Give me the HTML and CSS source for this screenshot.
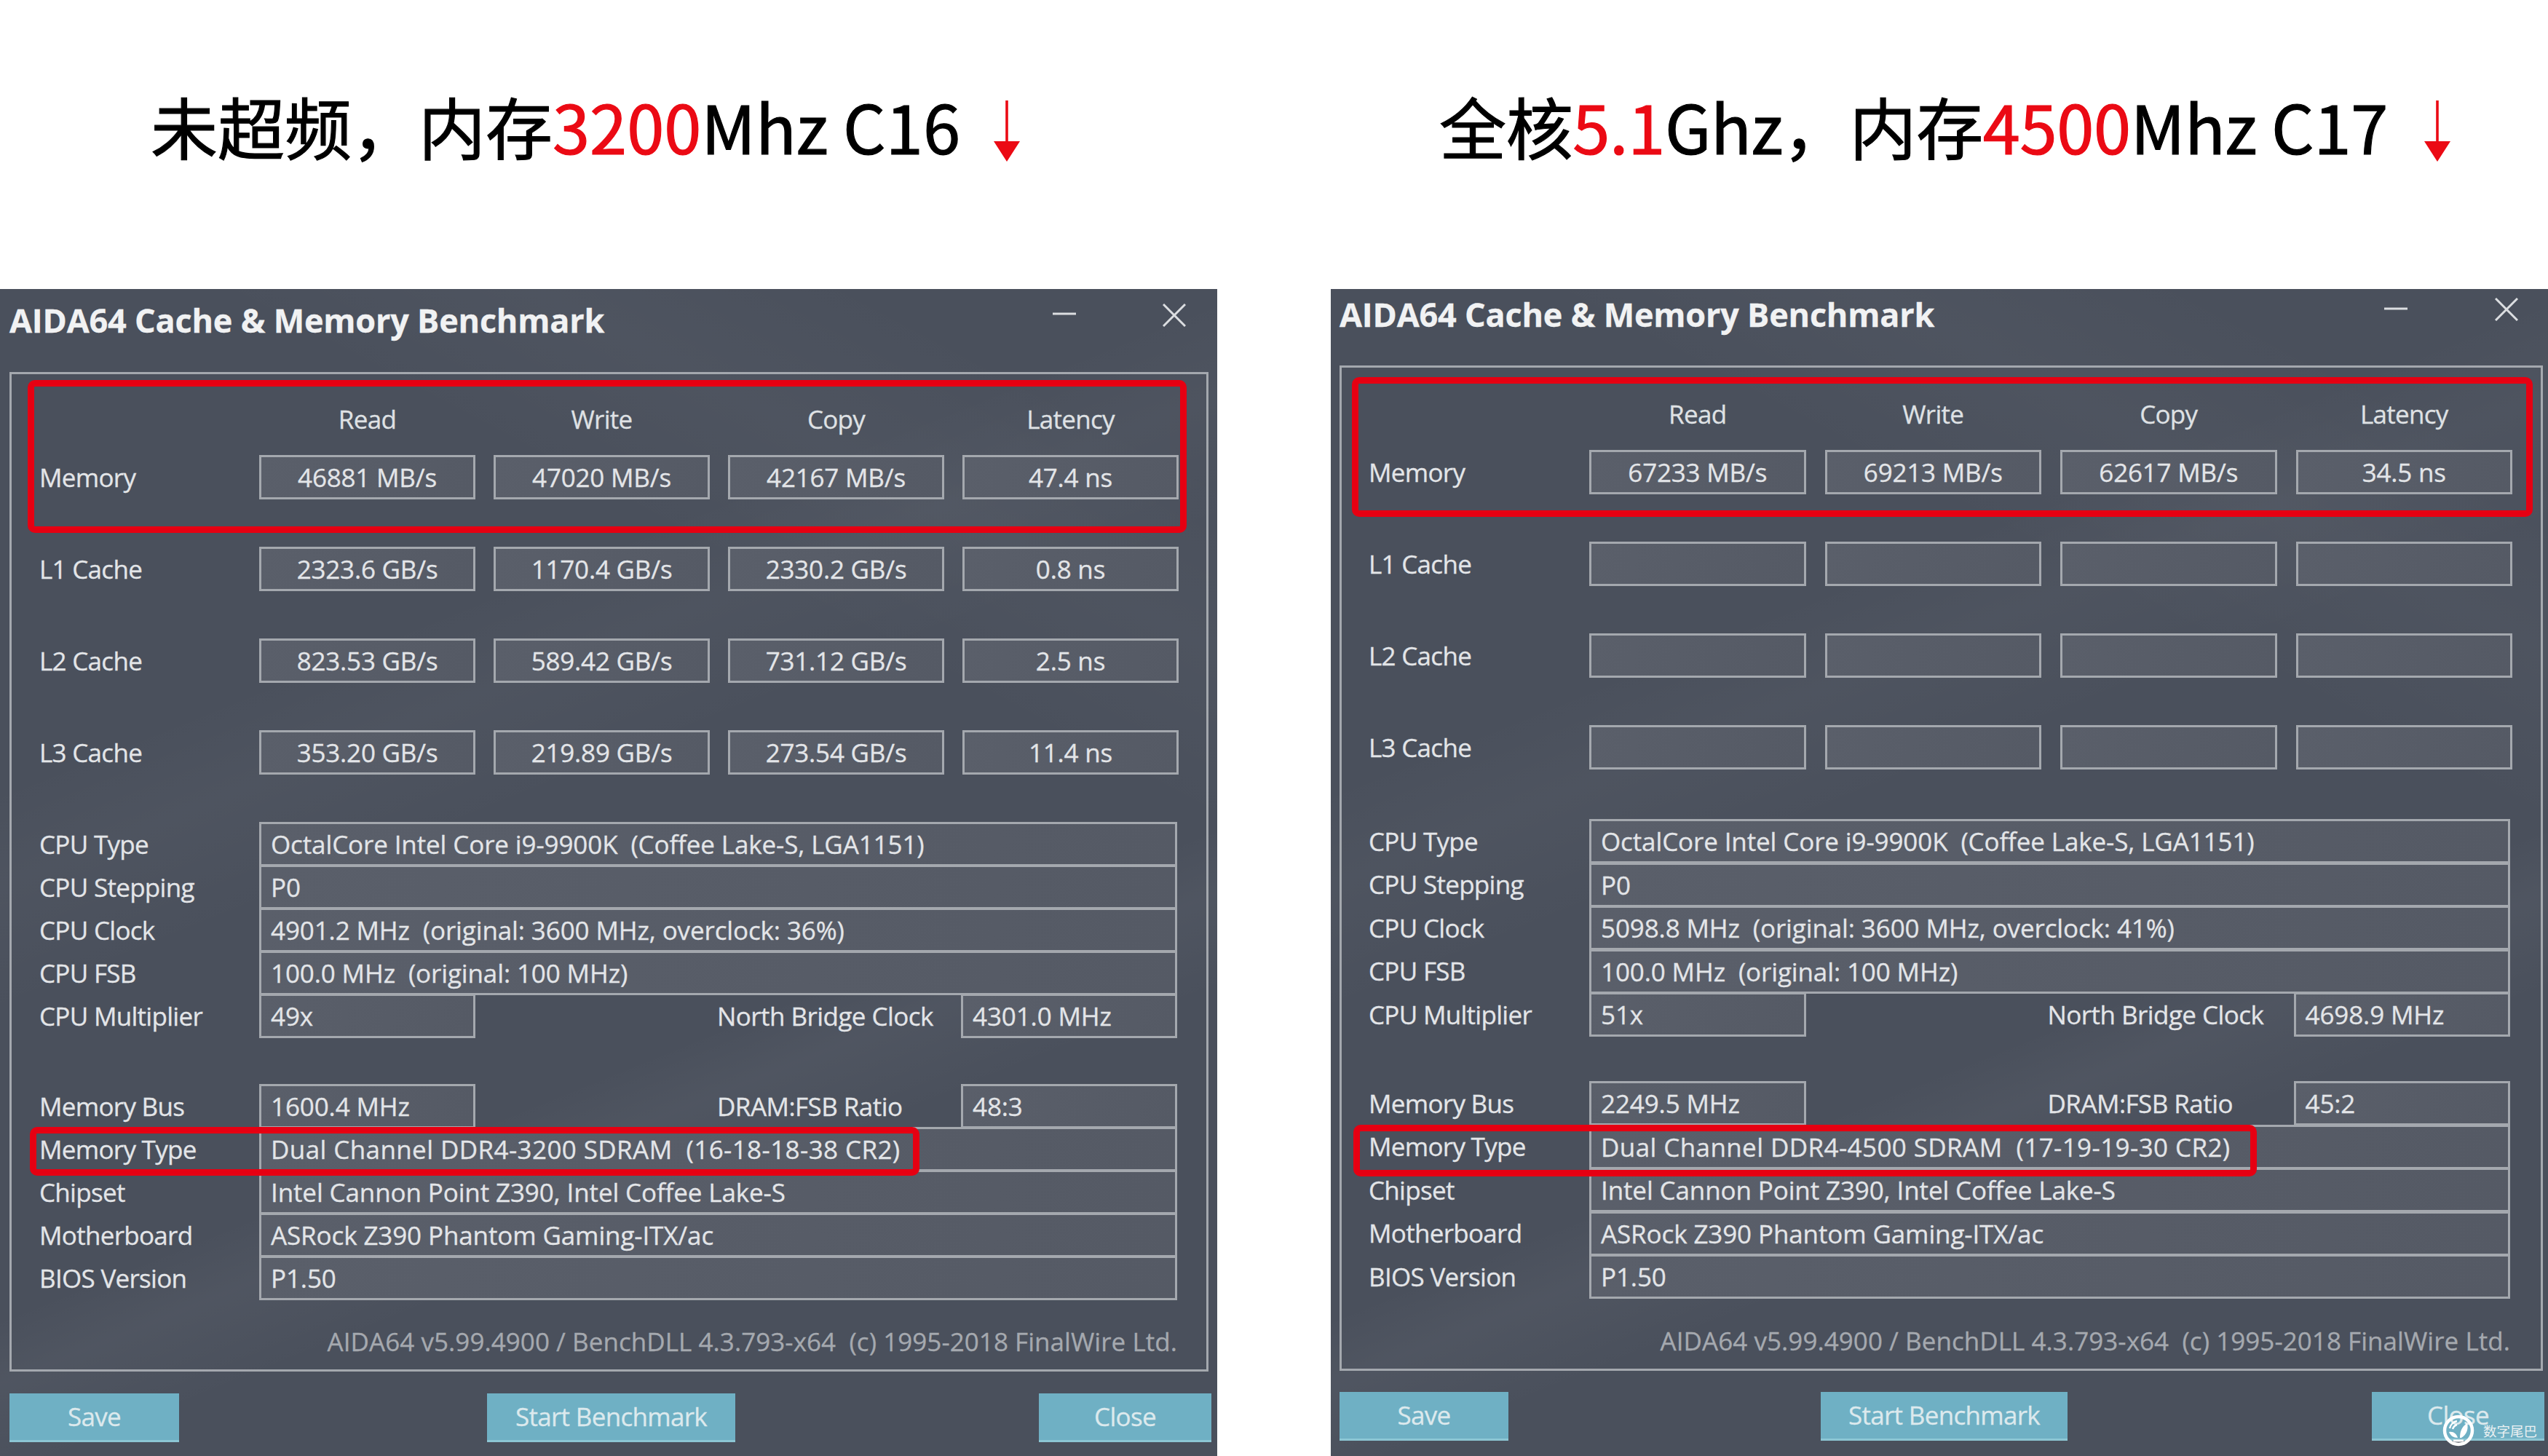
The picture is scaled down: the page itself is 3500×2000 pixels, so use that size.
FILE: index.html
```html
<!DOCTYPE html>
<html lang="zh-CN">
<head>
<meta charset="utf-8">
<title>AIDA64 Cache &amp; Memory Benchmark</title>
<link rel="stylesheet" href="styles.css">
</head>
<body>
<main class="page">
  <section class="pane pane-left">
    <h1 class="heading">未超频，内存<span class="hot">3200</span>Mhz C16<svg class="arrow" viewBox="0 0 36 84"><path d="M16.2 0h3.6v56H36L18 84 0 56h16.2z"/></svg></h1>
    <div class="window">
      <header class="titlebar">
        <div class="title">AIDA64 Cache &amp; Memory Benchmark</div>
        <svg class="winctl ctl-min" viewBox="0 0 32 4"><path d="M0 2h32"/></svg>
        <svg class="winctl ctl-close" viewBox="0 0 32 32"><path d="M1 1l30 30M31 1L1 31"/></svg>
      </header>
      <div class="group">
        <div class="bench-row bench-head"><span></span><span>Read</span><span>Write</span><span>Copy</span><span>Latency</span></div>
        <div class="bench-row"><span class="label">Memory</span><span class="field">46881 MB/s</span><span class="field">47020 MB/s</span><span class="field">42167 MB/s</span><span class="field">47.4 ns</span></div>
        <div class="bench-row"><span class="label">L1 Cache</span><span class="field">2323.6 GB/s</span><span class="field">1170.4 GB/s</span><span class="field">2330.2 GB/s</span><span class="field">0.8 ns</span></div>
        <div class="bench-row"><span class="label">L2 Cache</span><span class="field">823.53 GB/s</span><span class="field">589.42 GB/s</span><span class="field">731.12 GB/s</span><span class="field">2.5 ns</span></div>
        <div class="bench-row"><span class="label">L3 Cache</span><span class="field">353.20 GB/s</span><span class="field">219.89 GB/s</span><span class="field">273.54 GB/s</span><span class="field">11.4 ns</span></div>
        <div class="info info-cpu">
          <div class="info-row"><span class="label">CPU Type</span><span class="ifield">OctalCore Intel Core i9-9900K  (Coffee Lake-S, LGA1151)</span></div>
          <div class="info-row"><span class="label">CPU Stepping</span><span class="ifield">P0</span></div>
          <div class="info-row"><span class="label">CPU Clock</span><span class="ifield">4901.2 MHz  (original: 3600 MHz, overclock: 36%)</span></div>
          <div class="info-row"><span class="label">CPU FSB</span><span class="ifield">100.0 MHz  (original: 100 MHz)</span></div>
          <div class="info-row"><span class="label">CPU Multiplier</span><span class="ifield ifield-half">49x</span><span class="label-mid">North Bridge Clock</span><span class="ifield ifield-half">4301.0 MHz</span></div>
        </div>
        <div class="info info-mem">
          <div class="info-row"><span class="label">Memory Bus</span><span class="ifield ifield-half">1600.4 MHz</span><span class="label-mid">DRAM:FSB Ratio</span><span class="ifield ifield-half">48:3</span></div>
          <div class="info-row"><span class="label">Memory Type</span><span class="ifield ifield-wide">Dual Channel DDR4-3200 SDRAM  (16-18-18-38 CR2)</span></div>
          <div class="info-row"><span class="label">Chipset</span><span class="ifield">Intel Cannon Point Z390, Intel Coffee Lake-S</span></div>
          <div class="info-row"><span class="label">Motherboard</span><span class="ifield">ASRock Z390 Phantom Gaming-ITX/ac</span></div>
          <div class="info-row"><span class="label">BIOS Version</span><span class="ifield">P1.50</span></div>
        </div>
        <div class="footer">AIDA64 v5.99.4900 / BenchDLL 4.3.793-x64  (c) 1995-2018 FinalWire Ltd.</div>
      </div>
      <div class="buttons">
        <button class="btn btn-save">Save</button>
        <button class="btn btn-start">Start Benchmark</button>
        <button class="btn btn-close">Close</button>
      </div>
      <div class="mark mark-bench"></div>
      <div class="mark mark-type"></div>
    </div>
  </section>

  <section class="pane pane-right">
    <h1 class="heading">全核<span class="hot">5.1</span>Ghz，内存<span class="hot">4500</span>Mhz C17<svg class="arrow" viewBox="0 0 36 84"><path d="M16.2 0h3.6v56H36L18 84 0 56h16.2z"/></svg></h1>
    <div class="window">
      <header class="titlebar">
        <div class="title">AIDA64 Cache &amp; Memory Benchmark</div>
        <svg class="winctl ctl-min" viewBox="0 0 32 4"><path d="M0 2h32"/></svg>
        <svg class="winctl ctl-close" viewBox="0 0 32 32"><path d="M1 1l30 30M31 1L1 31"/></svg>
      </header>
      <div class="group">
        <div class="bench-row bench-head"><span></span><span>Read</span><span>Write</span><span>Copy</span><span>Latency</span></div>
        <div class="bench-row"><span class="label">Memory</span><span class="field">67233 MB/s</span><span class="field">69213 MB/s</span><span class="field">62617 MB/s</span><span class="field">34.5 ns</span></div>
        <div class="bench-row"><span class="label">L1 Cache</span><span class="field"></span><span class="field"></span><span class="field"></span><span class="field"></span></div>
        <div class="bench-row"><span class="label">L2 Cache</span><span class="field"></span><span class="field"></span><span class="field"></span><span class="field"></span></div>
        <div class="bench-row"><span class="label">L3 Cache</span><span class="field"></span><span class="field"></span><span class="field"></span><span class="field"></span></div>
        <div class="info info-cpu">
          <div class="info-row"><span class="label">CPU Type</span><span class="ifield">OctalCore Intel Core i9-9900K  (Coffee Lake-S, LGA1151)</span></div>
          <div class="info-row"><span class="label">CPU Stepping</span><span class="ifield">P0</span></div>
          <div class="info-row"><span class="label">CPU Clock</span><span class="ifield">5098.8 MHz  (original: 3600 MHz, overclock: 41%)</span></div>
          <div class="info-row"><span class="label">CPU FSB</span><span class="ifield">100.0 MHz  (original: 100 MHz)</span></div>
          <div class="info-row"><span class="label">CPU Multiplier</span><span class="ifield ifield-half">51x</span><span class="label-mid">North Bridge Clock</span><span class="ifield ifield-half">4698.9 MHz</span></div>
        </div>
        <div class="info info-mem">
          <div class="info-row"><span class="label">Memory Bus</span><span class="ifield ifield-half">2249.5 MHz</span><span class="label-mid">DRAM:FSB Ratio</span><span class="ifield ifield-half">45:2</span></div>
          <div class="info-row"><span class="label">Memory Type</span><span class="ifield ifield-wide">Dual Channel DDR4-4500 SDRAM  (17-19-19-30 CR2)</span></div>
          <div class="info-row"><span class="label">Chipset</span><span class="ifield">Intel Cannon Point Z390, Intel Coffee Lake-S</span></div>
          <div class="info-row"><span class="label">Motherboard</span><span class="ifield">ASRock Z390 Phantom Gaming-ITX/ac</span></div>
          <div class="info-row"><span class="label">BIOS Version</span><span class="ifield">P1.50</span></div>
        </div>
        <div class="footer">AIDA64 v5.99.4900 / BenchDLL 4.3.793-x64  (c) 1995-2018 FinalWire Ltd.</div>
      </div>
      <div class="buttons">
        <button class="btn btn-save">Save</button>
        <button class="btn btn-start">Start Benchmark</button>
        <button class="btn btn-close">Close</button>
      </div>
      <div class="mark mark-bench"></div>
      <div class="mark mark-type"></div>
      <div class="watermark">
        <svg class="wm-icon" viewBox="0 0 44 44"><circle cx="22" cy="22" r="19" fill="none" stroke="#fff" stroke-width="4.5"/><path d="M24 32c0-8 2-15 10-20 2 8-1 16-8 20z" fill="#fff"/><path d="M21 32c-6 0-10-3-12-8 6-1 10 2 12 8z" fill="#fff"/><path d="M10 19c1-5 5-9 10-10M14 20c1-3 3-5 6-6" fill="none" stroke="#fff" stroke-width="2.4"/><path d="M15 36h14" stroke="#fff" stroke-width="3"/></svg>
        <span class="wm-text">数字尾巴</span>
      </div>
    </div>
  </section>
</main>
</body>
</html>
```

FILE: styles.css
```css
* { box-sizing: border-box; }
html, body { margin: 0; padding: 0; }
body {
  width: 3500px;
  height: 2000px;
  overflow: hidden;
  background: #fff;
}
.page {
  display: grid;
  grid-template-columns: 1672px 1672px;
  column-gap: 156px;
}
.pane { display: flex; flex-direction: column; }

/* headings */
.heading {
  height: 397px;
  margin: 0;
  display: flex;
  align-items: baseline;
  white-space: pre;
  font: 400 92px/1 "Noto Sans CJK SC", "Noto Sans", sans-serif;
  color: #000;
  -webkit-text-stroke: 1.2px #000;
}
.heading .hot { color: #eb0a14; -webkit-text-stroke: 1.2px #eb0a14; }
.pane-left .heading { padding: 126px 0 0 207px; }
.pane-right .heading { padding: 126px 0 0 149px; letter-spacing: -0.35px; }
.arrow {
  width: 36px;
  height: 84px;
  fill: #eb0a14;
  margin-left: 46px;
  align-self: flex-start;
  margin-top: 12px;
}
.pane-right .arrow { margin-left: 50px; }

/* window */
.window {
  position: relative;
  height: 1603px;
  padding: 0 var(--pad-r) 0 var(--pad-l);
  color: #e3e5e8;
  font: 400 35px/40px "Open Sans", "Noto Sans", sans-serif;
  letter-spacing: -0.7px;
  -webkit-text-stroke: 0.3px currentColor;
  background:
    linear-gradient(158deg, transparent 62%, rgba(255,255,255,.03) 66%, transparent 72%),
    linear-gradient(158deg, transparent 30%, rgba(255,255,255,.025) 36%, transparent 44%),
    linear-gradient(28deg, transparent 70%, rgba(255,255,255,.025) 80%, transparent 90%),
    #4a505c;
}
.pane-left .window {
  --pad-l: 13px; --pad-r: 12px;
  --bar-h: 114px; --title-h: 86px;
  --head-h: 111px; --label-w: 302px; --info-gap: 65px;
  --mem-gap: 65px; --foot-gap: 39px; --foot-h: 58px; --row-over: -2px;
  --col-gap: 25px; --col-w: 297px;
  --btn-top: 30px; --start-left: 423px; --close-over: -4px;
  --save-w: 233px; --start-w: 341px;
  --group-pad: 38px; --group-pad-r: 40px;
}
.pane-right .window {
  --pad-l: 12px; --pad-r: 7px;
  --bar-h: 105px; --title-h: 70px;
  --head-h: 113px; --label-w: 303px; --info-gap: 68px;
  --mem-gap: 62.5px; --foot-gap: 39px; --foot-h: 58px; --row-over: -1.5px;
  --col-gap: 26px; --col-w: 297.5px;
  --btn-top: 29px; --start-left: 429px; --close-over: -2px;
  --save-w: 232px; --start-w: 339px;
  --group-pad: 37px; --group-pad-r: 42px;
}
.titlebar {
  position: relative;
  height: var(--bar-h);
}
.title {
  font-size: 45px;
  font-weight: 700;
  line-height: var(--title-h);
  letter-spacing: -0.2px;
  color: #f1f2f3;
}
.winctl {
  position: absolute;
  fill: none;
  stroke: #dcdee1;
  stroke-width: 3;
}
.ctl-min { width: 32px; height: 4px; }
.ctl-close { width: 32px; height: 32px; }
.pane-left .ctl-min { left: 1433px; top: 32px; }
.pane-left .ctl-close { left: 1584px; top: 20px; }
.pane-right .ctl-min { left: 1435px; top: 25px; }
.pane-right .ctl-close { left: 1587px; top: 12px; }

.group {
  border: 3px solid #a4a8ae;
  padding: 0 var(--group-pad-r) 0 var(--group-pad);
}
.bench-row {
  display: grid;
  grid-template-columns: calc(var(--label-w) - var(--col-gap)) repeat(4, var(--col-w));
  column-gap: var(--col-gap);
  align-items: center;
  margin-bottom: 65px;
}
.bench-head {
  height: var(--head-h);
  margin: 0;
  padding-bottom: 29px;
  align-items: end;
  text-align: center;
  color: #dfe1e4;
}
.label { display: block; white-space: pre; }
.field {
  height: 61px;
  border: 3px solid #a4a8ae;
  background: linear-gradient(100deg, #5a5f6a, #555a65);
  text-align: center;
  line-height: 55px;
  white-space: pre;
  letter-spacing: -0.2px;
}
.info-cpu { margin-top: var(--info-gap); }
.info-mem { margin-top: var(--mem-gap); }
.info-row {
  display: flex;
  align-items: center;
  height: 61px;
  margin-bottom: var(--row-over);
}
.info-row .label { width: var(--label-w); flex: none; }
.ifield {
  flex: 1;
  align-self: stretch;
  border: 3px solid #a4a8ae;
  background: linear-gradient(100deg, #5a5f6a, #555a65);
  padding-left: 13px;
  line-height: 55px;
  white-space: pre;
  letter-spacing: -0.12px;
}
.ifield-wide { letter-spacing: 0.4px; }
.ifield-half { flex: none; width: var(--col-w); }
.label-mid {
  flex: 1;
  padding-left: 332px;
  white-space: pre;
  letter-spacing: -0.55px;
}
.footer {
  margin-top: var(--foot-gap);
  height: var(--foot-h);
  text-align: right;
  white-space: pre;
  color: #a5a9af;
  letter-spacing: 0.05px;
}
.buttons {
  display: flex;
  margin-top: var(--btn-top);
  margin-right: var(--close-over);
}
.btn {
  height: 67px;
  border: 0;
  border-bottom: 3px solid #8cc6d4;
  padding: 0;
  background: #6fb0c4;
  color: #dce9ed;
  font: inherit;
  letter-spacing: inherit;
}
.btn-save { width: var(--save-w); }
.btn-start { width: var(--start-w); margin-left: var(--start-left); }
.btn-close { width: 237px; margin-left: auto; }

/* red annotations */
.mark {
  position: absolute;
  border: 9px solid #e60012;
  border-radius: 10px;
  pointer-events: none;
}
.pane-left .mark-bench { left: 38px; top: 125px; width: 1592px; height: 210px; }
.pane-left .mark-type { left: 41px; top: 1151px; width: 1222px; height: 67px; }
.pane-right .mark-bench { left: 29px; top: 121px; width: 1622px; height: 192px; }
.pane-right .mark-type { left: 31px; top: 1148px; width: 1241px; height: 71px; }

/* watermark */
.watermark {
  position: absolute;
  left: 1527px;
  top: 1546px;
  display: flex;
  align-items: center;
  gap: 12px;
  color: #eaf0f2;
  -webkit-text-stroke: 0;
}
.wm-icon { width: 44px; height: 44px; }
.wm-text {
  font: 400 18.5px/1 "Noto Sans CJK SC", sans-serif;
  letter-spacing: 0;
}
```
